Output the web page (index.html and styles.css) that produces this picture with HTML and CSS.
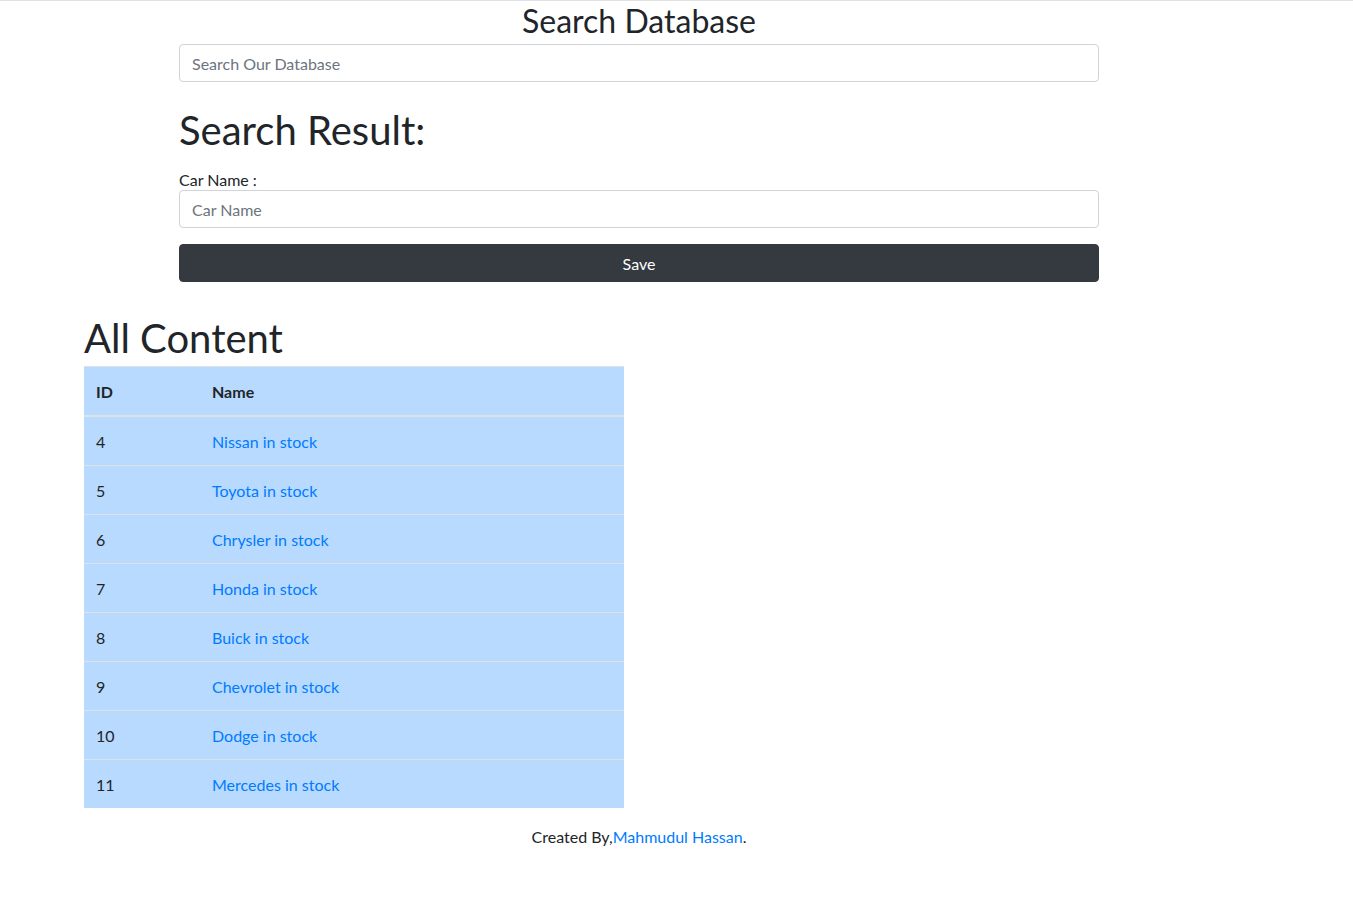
FILE: index.html
```html
<!DOCTYPE html>
<html lang="en">
<head>
<meta charset="utf-8">
<title>Search Database</title>
<link rel="stylesheet" href="styles.css">
</head>
<body>
<div class="page">
  <div class="search-area">
    <h2 class="title">Search Database</h2>
    <input class="form-control" type="text" placeholder="Search Our Database">
    <h1 class="result-title">Search Result:</h1>
    <form class="car-form">
      <label class="car-label">Car Name :</label>
      <input class="form-control" type="text" placeholder="Car Name">
      <button class="btn-save" type="button">Save</button>
    </form>
  </div>
  <div class="content-area">
    <h1 class="content-title">All Content</h1>
    <table class="cars">
      <thead>
        <tr><th class="col-id">ID</th><th>Name</th></tr>
      </thead>
      <tbody>
        <tr><td>4</td><td><a href="#">Nissan in stock</a></td></tr>
        <tr><td>5</td><td><a href="#">Toyota in stock</a></td></tr>
        <tr><td>6</td><td><a href="#">Chrysler in stock</a></td></tr>
        <tr><td>7</td><td><a href="#">Honda in stock</a></td></tr>
        <tr><td>8</td><td><a href="#">Buick in stock</a></td></tr>
        <tr><td>9</td><td><a href="#">Chevrolet in stock</a></td></tr>
        <tr><td>10</td><td><a href="#">Dodge in stock</a></td></tr>
        <tr><td>11</td><td><a href="#">Mercedes in stock</a></td></tr>
      </tbody>
    </table>
  </div>
  <p class="footer">Created By,<a href="#">Mahmudul Hassan</a>.</p>
</div>
</body>
</html>
```

FILE: styles.css
```css
* { box-sizing: border-box; }
html, body { margin: 0; padding: 0; }
body {
  font-family: "Lato", "Open Sans", sans-serif;
  font-size: 16px;
  line-height: 1.5;
  color: #212529;
  background: #fff;
  border-top: 1px solid #dee2e6;
}
a { color: #007bff; text-decoration: none; }
.page { width: 1278px; }
.search-area { width: 920px; margin: 0 auto; }
.title {
  font-size: 32px; font-weight: 400; line-height: 38px;
  margin: 0 0 4px; padding-top: 1px; height: 39px; text-align: center;
}
.form-control {
  display: block; width: 100%; height: 38px;
  padding: 6px 12px; font: inherit; font-size: 16px; color: #495057;
  border: 1px solid #ced4da; border-radius: 4px; background: #fff;
}
.form-control::placeholder { color: #6c757d; }
.result-title {
  font-size: 40px; font-weight: 400; line-height: 48px;
  margin: 24px 0 16px;
}
.car-form { display: flex; flex-direction: column; }
.car-label { line-height: 20px; }
.btn-save {
  margin-top: 16px; height: 38px; width: 100%;
  padding: 2px 12px 0;
  background: #343a40; color: #fff; border: 1px solid #343a40;
  border-radius: 4px; font: inherit; font-size: 16px;
}
.content-area { padding-left: 84px; margin-top: 32px; }
.content-title {
  font-size: 40px; font-weight: 400; line-height: 48px; margin: 0 0 4px;
}
.cars {
  width: 540px; border-collapse: collapse; background: #b8daff;
}
.cars th, .cars td {
  text-align: left; padding: 13px 12px 11px; line-height: 24px;
  border-top: 1px solid #dee2e6; vertical-align: top;
}
.cars thead th { border-bottom: 2px solid #dee2e6; font-weight: 700; }
.cars tbody tr:first-child td { border-top: 0; }
.cars .col-id { width: 116px; }
.footer { text-align: center; margin: 17px 0 0; }
```
